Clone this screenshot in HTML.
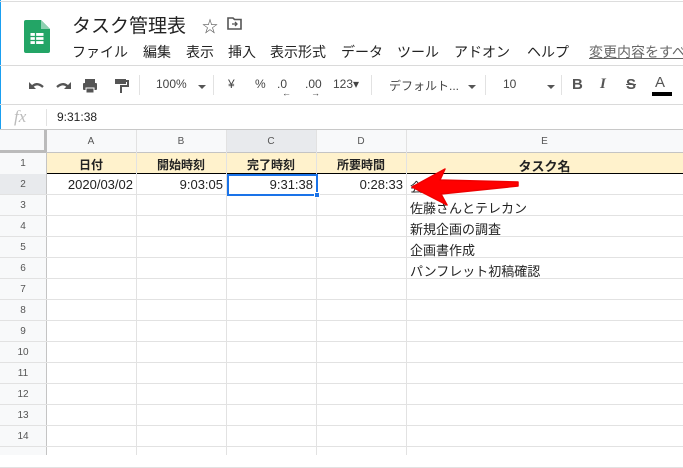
<!DOCTYPE html>
<html><head><meta charset="utf-8"><style>
*{margin:0;padding:0;box-sizing:border-box}
body{width:683px;height:455px;overflow:hidden;background:#fff;position:relative;font-family:"Liberation Sans","Noto Sans CJK JP",sans-serif;color:#222}
.a{position:absolute;white-space:nowrap}
.h{position:absolute;background:#e2e2e2}
.tb{font-size:12px;color:#444}
.m{position:absolute;top:42px;font-size:14px;color:#222;white-space:nowrap}
</style></head><body>
<div class="a" style="left:0;top:0;width:1px;height:455px;background:#1a9ff0"></div>
<div class="h" style="left:0;top:1px;width:683px;height:1px;background:#ddd"></div>
<svg class="a" style="left:24px;top:20px" width="26" height="33" viewBox="0 0 26 33"><path d="M2 0H17L26 9V31a2 2 0 0 1-2 2H2a2 2 0 0 1-2-2V2a2 2 0 0 1 2-2z" fill="#23a566"/><path d="M17 0V9H26z" fill="#8ed1b1"/><rect x="6.5" y="13" width="13" height="11" fill="#fff"/><path d="M6.5 16.5H19.5M6.5 20.5H19.5M11.5 13V24" stroke="#23a566" stroke-width="1.3"/></svg>
<div class="a" style="left:72px;top:11px;font-size:19px;color:#222">タスク管理表</div>
<div class="a" style="left:202px;top:13px;font-size:16px;color:#555">☆</div>
<svg class="a" style="left:227px;top:17px" width="15" height="13" viewBox="0 0 15 13"><path d="M1 1h5l1.5 1.5H14V12H1z" fill="none" stroke="#555" stroke-width="1.6"/><path d="M5 7h5M8 5l2 2-2 2" stroke="#555" stroke-width="1.3" fill="none"/></svg>
<div class="m" style="left:72px">ファイル</div>
<div class="m" style="left:143px">編集</div>
<div class="m" style="left:186px">表示</div>
<div class="m" style="left:228px">挿入</div>
<div class="m" style="left:270px">表示形式</div>
<div class="m" style="left:341px">データ</div>
<div class="m" style="left:397px">ツール</div>
<div class="m" style="left:454px">アドオン</div>
<div class="m" style="left:527px">ヘルプ</div>
<div class="a" style="left:589px;top:42px;font-size:14px;color:#666;text-decoration:underline">変更内容をすべ</div>
<div class="h" style="left:0;top:65px;width:683px;height:1px;background:#dadada"></div>
<svg class="a" style="left:28px;top:78px" width="110" height="16" viewBox="0 0 110 16"><path d="M3 10q5-7 12-1" stroke="#555" stroke-width="2.4" fill="none"/><path d="M1 4v7h7z" fill="#555"/><path d="M41 10q-5-7-12-1" stroke="#555" stroke-width="2.4" fill="none"/><path d="M43 4v7h-7z" fill="#555"/><rect x="57" y="1" width="10" height="4" fill="#555"/><rect x="55" y="5" width="14" height="7" rx="1" fill="#555"/><rect x="58" y="10" width="8" height="5" fill="#555" stroke="#fff" stroke-width="1"/><rect x="87" y="1" width="11" height="5" fill="#555"/><path d="M98 3h2v5h-7v7" stroke="#555" stroke-width="2" fill="none"/></svg>
<div class="h" style="left:139px;top:75px;width:1px;height:20px"></div>
<div class="a tb" style="left:156px;top:77px">100%</div>
<div class="a" style="left:198px;top:85px;border:4px solid transparent;border-top:4px solid #555"></div>
<div class="h" style="left:213px;top:75px;width:1px;height:20px"></div>
<div class="a tb" style="left:228px;top:77px">¥</div>
<div class="a tb" style="left:255px;top:77px">%</div>
<div class="a tb" style="left:277px;top:77px">.0</div>
<div class="a tb" style="left:282px;top:88px;font-size:9px">←</div>
<div class="a tb" style="left:305px;top:77px">.00</div>
<div class="a tb" style="left:311px;top:88px;font-size:9px">→</div>
<div class="a tb" style="left:333px;top:77px">123▾</div>
<div class="h" style="left:371px;top:75px;width:1px;height:20px"></div>
<div class="a tb" style="left:389px;top:77px">デフォルト...</div>
<div class="a" style="left:468px;top:85px;border:4px solid transparent;border-top:4px solid #555"></div>
<div class="h" style="left:485px;top:75px;width:1px;height:20px"></div>
<div class="a tb" style="left:503px;top:77px">10</div>
<div class="a" style="left:547px;top:85px;border:4px solid transparent;border-top:4px solid #555"></div>
<div class="h" style="left:561px;top:75px;width:1px;height:20px"></div>
<div class="a" style="left:572px;top:76px;font-size:15px;font-weight:bold;color:#555">B</div>
<div class="a" style="left:600px;top:76px;font-size:15px;font-style:italic;font-weight:bold;color:#555;font-family:'Liberation Serif',serif">I</div>
<div class="a" style="left:626px;top:76px;font-size:15px;color:#555;text-decoration:line-through;font-weight:bold">S</div>
<div class="a" style="left:655px;top:74px;font-size:15px;color:#555">A</div>
<div class="a" style="left:652px;top:92px;width:20px;height:4px;background:#000"></div>
<div class="h" style="left:0;top:104px;width:683px;height:1px;background:#dadada"></div>
<div class="a" style="left:14px;top:107px;font-size:17px;font-style:italic;color:#bbb;font-family:'Liberation Serif',serif">fx</div>
<div class="h" style="left:46px;top:109px;width:1px;height:17px"></div>
<div class="a" style="left:57px;top:110px;font-size:12px;color:#222">9:31:38</div>
<div class="h" style="left:0;top:129px;width:683px;height:1px;background:#c8c8c8"></div>
<div class="a" style="left:0;top:130px;width:46px;height:325px;background:#f8f9fa"></div>
<div class="a" style="left:46px;top:130px;width:637px;height:22px;background:#f8f9fa"></div>
<div class="a" style="left:227px;top:130px;width:90px;height:22px;background:#e8eaed"></div>
<div class="a" style="left:0;top:174px;width:46px;height:21px;background:#e8eaed"></div>
<div class="a" style="left:46px;top:153px;width:361px;height:21px;background:#fff2cc"></div>
<div class="a" style="left:407px;top:153px;width:276px;height:21px;background:#fff2cc"></div>
<div class="h" style="left:0;top:152px;width:683px;height:1px;background:#c4c4c4"></div>
<div class="h" style="left:46px;top:173px;width:637px;height:1px;background:#000"></div>
<div id="g"></div>
<div class="a" style="left:44px;top:130px;width:3px;height:22px;background:#bbb"></div>
<div class="a" style="left:0;top:150px;width:46px;height:3px;background:#bbb"></div>
<script>
let s='';
const cols=[46,136,226,316,406];
cols.forEach(x=>{s+=`<div class="h" style="left:${x}px;top:130px;width:1px;height:325px;background:${x==46?'#c4c4c4':'#e2e2e2'}"></div>`});
for(let i=0;i<15;i++){const y=153+21*i+20;if(i>0)s+=`<div class="h" style="left:0;top:${y}px;width:683px;height:1px"></div>`;
if(i<14)s+=`<div class="a" style="left:0;width:46px;text-align:center;top:${153+21*i+5}px;font-size:10px;color:#555">${i+1}</div>`;}
['A','B','C','D','E'].forEach((c,i)=>{const l=cols[i],w=i<4?90:277;s+=`<div class="a" style="left:${l}px;width:${w}px;text-align:center;top:136px;font-size:10px;color:#555">${c}</div>`});
document.getElementById('g').innerHTML=s;
</script>
<div class="a" style="left:46px;width:90px;text-align:center;top:156px;font-size:12px;font-weight:bold">日付</div>
<div class="a" style="left:136px;width:90px;text-align:center;top:156px;font-size:12px;font-weight:bold">開始時刻</div>
<div class="a" style="left:226px;width:90px;text-align:center;top:156px;font-size:12px;font-weight:bold">完了時刻</div>
<div class="a" style="left:316px;width:90px;text-align:center;top:156px;font-size:12px;font-weight:bold">所要時間</div>
<div class="a" style="left:406px;width:277px;text-align:center;top:156px;font-size:13px;font-weight:bold">タスク名</div>
<div class="a" style="left:46px;width:87px;text-align:right;top:177px;font-size:13px">2020/03/02</div>
<div class="a" style="left:136px;width:87px;text-align:right;top:177px;font-size:13px">9:03:05</div>
<div class="a" style="left:226px;width:87px;text-align:right;top:177px;font-size:13px">9:31:38</div>
<div class="a" style="left:316px;width:87px;text-align:right;top:177px;font-size:13px">0:28:33</div>
<div class="a" style="left:410px;top:177px;font-size:13px">会</div>
<div class="a" style="left:410px;top:198px;font-size:13px">佐藤さんとテレカン</div>
<div class="a" style="left:410px;top:219px;font-size:13px">新規企画の調査</div>
<div class="a" style="left:410px;top:240px;font-size:13px">企画書作成</div>
<div class="a" style="left:410px;top:261px;font-size:13px">パンフレット初稿確認</div>
<div class="a" style="left:227px;top:174px;width:91px;height:22px;border:2px solid #1a73e8"></div>
<div class="a" style="left:314px;top:192px;width:6px;height:6px;background:#1a73e8;border:1px solid #fff"></div>
<svg class="a" style="left:405px;top:165px" width="120" height="42" viewBox="0 0 120 42"><path d="M7 22L40 4L35 15L113 17L113 21L36 29L42 40Z" fill="#f00" stroke="#e00" stroke-width="1.5" stroke-linejoin="round"/></svg>
</body></html>
